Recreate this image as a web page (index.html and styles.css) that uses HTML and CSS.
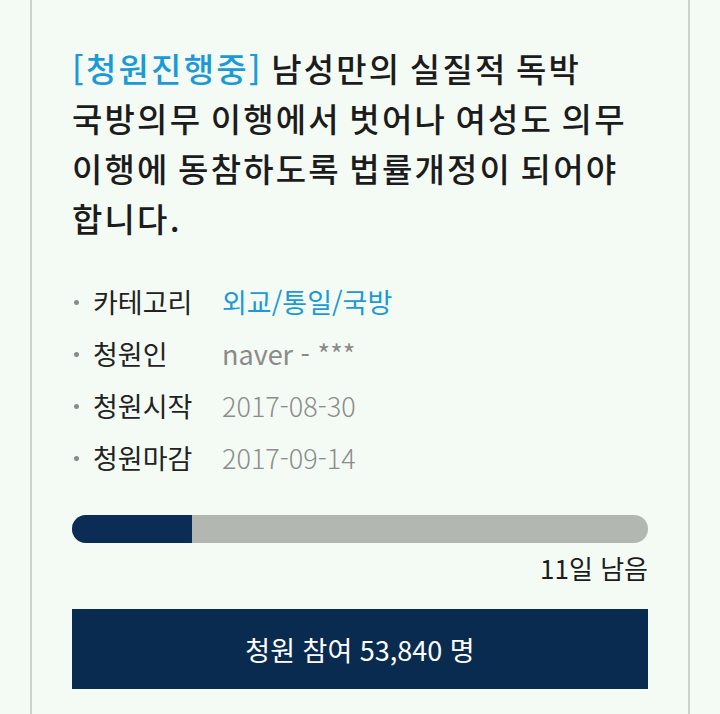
FILE: index.html
```html
<!DOCTYPE html>
<html lang="ko">
<head>
<meta charset="UTF-8">
<meta name="viewport" content="width=device-width, initial-scale=1.0">
<title>청원 상세</title>
<link rel="stylesheet" href="styles.css">
</head>
<body>
<div class="petition">
  <h2 class="petition-title"><span class="status">[청원진행중]</span> 남성만의 실질적 독박 국방의무 이행에서 벗어나 여성도 의무 이행에 동참하도록 법률개정이 되어야 합니다.</h2>

  <ul class="petition-info">
    <li><span class="label">카테고리</span><span class="value category">외교/통일/국방</span></li>
    <li><span class="label">청원인</span><span class="value">naver - ***</span></li>
    <li><span class="label">청원시작</span><span class="value date">2017-08-30</span></li>
    <li><span class="label">청원마감</span><span class="value date">2017-09-14</span></li>
  </ul>

  <div class="progress">
    <div class="progress-fill" style="width: 20.8%"></div>
  </div>
  <div class="remain">11일 남음</div>

  <button class="join-btn">청원 참여 53,840 명</button>
</div>
</body>
</html>
```

FILE: styles.css
```css
body {
  margin: 0;
  background-color: #f4fbf4;
  font-family: "Noto Sans CJK KR", "Noto Sans", sans-serif;
  color: #1c1c1c;
}

.petition {
  margin: 0 30px 0 30px;
  padding: 43px 40px 60px 40px;
  border: 2px solid #ccd1cc;
  border-top: none;
  min-height: 700px;
}

.petition-title {
  margin: 0;
  font-size: 33px;
  line-height: 50px;
  letter-spacing: 2.2px;
  word-spacing: -3px;
  word-break: keep-all;
  font-weight: 500;
  color: #1c1c1c;
}

.status {
  color: #1b9ad6;
}

.petition-info {
  list-style: none;
  margin: 33px 0 0 0;
  padding: 0;
}

.petition-info li {
  display: flex;
  align-items: center;
  font-size: 27px;
  line-height: 52px;
}

.petition-info li::before {
  content: "";
  width: 5px;
  height: 5px;
  border-radius: 50%;
  background-color: #8a8a8a;
  margin: 0 14px 0 2px;
}

.label {
  width: 129px;
  color: #222;
}

.value {
  color: #8a8a8a;
}

.value.category {
  color: #1b9ad6;
}

.value.date {
  font-weight: 300;
  color: #8c8c8c;
}

.progress {
  margin-top: 31px;
  height: 28px;
  border-radius: 14px;
  background-color: #b2b7b2;
  overflow: hidden;
}

.progress-fill {
  height: 100%;
  background-color: #0b2d55;
}

.remain {
  margin-top: 8px;
  text-align: right;
  font-size: 26px;
  line-height: 34px;
  color: #1c1c1c;
}

.join-btn {
  display: block;
  width: 100%;
  height: 80px;
  margin-top: 24px;
  border: none;
  background-color: #0a2b50;
  color: #fff;
  font-family: inherit;
  font-size: 27px;
  cursor: pointer;
}
```
